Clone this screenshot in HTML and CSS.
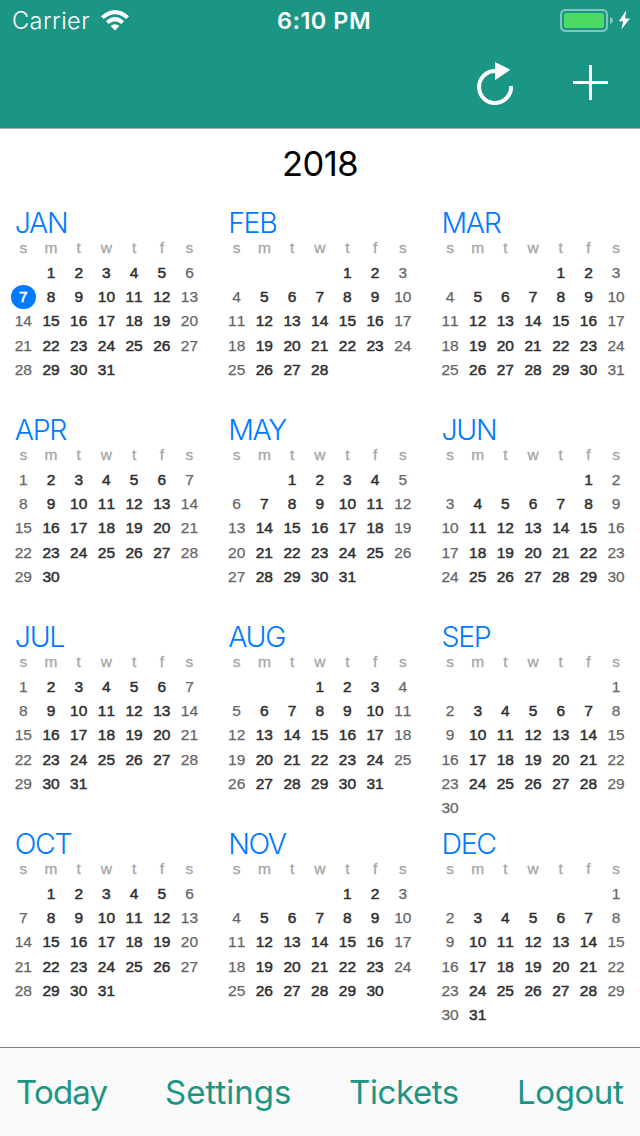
FILE: index.html
```html
<!DOCTYPE html>
<html lang="en">
<head>
<meta charset="utf-8">
<title>Calendar 2018</title>
<link rel="stylesheet" href="styles.css">
</head>
<body>
<header class="header">
  <div class="status">
    <div class="network"><span class="carrier">Carrier</span>
      <svg class="wifi" width="28" height="21" viewBox="0 0 28 21"><path d="M0 6.2Q14-6 28 6.2L25.2 9.1Q14-.7 2.8 9.1ZM4.9 11.2Q14 3 23.1 11.2L20.3 14Q14 8.5 7.7 14ZM9.6 16Q14 12.3 18.4 16L14 20.5Z" fill="#fff"/></svg>
    </div>
    <div class="clock">6:10 PM</div>
    <svg class="battery" width="72" height="24" viewBox="0 0 72 24"><rect x="1" y="1" width="46" height="21" rx="4.5" fill="none" stroke="#84c5bb" stroke-width="2"/><rect x="4" y="4" width="40" height="15" rx="2" fill="#4cd964"/><path d="M50 8Q53 9 53 11.5T50 15Z" fill="#84c5bb"/><path d="M66.3 1.2L58.8 12.2H63.2L61.3 20.5L70 9.5H65Z" fill="#fff"/></svg>
  </div>
  <div class="actions">
    <svg width="40" height="46" viewBox="0 0 40 46"><path d="M20 11A16 16 0 1 0 36 26" fill="none" stroke="#fff" stroke-width="4"/><path d="M20 2L35.3 9.7L20 20.2Z" fill="#fff"/></svg>
    <svg width="36" height="46" viewBox="0 0 36 46"><path d="M0 22.5H35M17.5 5V40" fill="none" stroke="#fff" stroke-width="3"/></svg>
  </div>
</header>
<main class="calendar">
  <h1 class="year">2018</h1>
  <div class="months" id="months"></div>
</main>
<nav class="toolbar"><span class="tool-today">Today</span><span class="tool-settings">Settings</span><span class="tool-tickets">Tickets</span><span class="tool-logout">Logout</span></nav>
<script src="calendar.js"></script>
</body>
</html>
```
FILE: styles.css
```css
* { box-sizing: border-box; }
body {
  margin: 0;
  width: 640px;
  height: 1136px;
  display: flex;
  flex-direction: column;
  overflow: hidden;
  background: #fff;
  font-family: Inter, "Liberation Sans", sans-serif;
}
.header { flex: none; height: 129px; background: #1b9584; border-bottom: 1px solid #a3a9a8; color: #fff; }
.status { display: grid; grid-template-columns: 1fr auto 1fr; height: 40px; padding: 1px 8px 0 12px; align-items: center; }
.network { display: flex; align-items: center; gap: 11px; font-size: 23.5px; }
.carrier { font-weight: 300; letter-spacing: .45px; }
.clock { font-size: 23.5px; font-weight: 600; letter-spacing: .5px; margin-left: 4px; }
.battery { justify-self: end; }
.actions { display: flex; justify-content: flex-end; gap: 58px; padding: 20px 31px 0 0; }
.calendar { flex: 1; }
.year { margin: 0; padding-top: 14px; height: 81px; line-height: 42px; text-align: center; font-size: 34.5px; font-weight: 400; letter-spacing: -.6px; }
.months { display: grid; grid-template-columns: repeat(3, 1fr); grid-auto-rows: 207px; }
.month { padding: 0 9.8px 0 9.5px; font-family: "Liberation Sans", Arial, sans-serif; }
.month-name { margin: 0; padding-left: 5.3px; height: 26.3px; font: 300 28.5px/26.3px Inter, sans-serif; letter-spacing: -1.3px; color: #007aff; }
.days { display: grid; grid-template-columns: repeat(7, 27.7px); grid-auto-rows: 24.35px; line-height: 24.35px; font-size: 15.5px; font-kerning: none; text-align: center; color: #303030; -webkit-text-stroke: .5px; }
.weekday { color: #a5a5a5; -webkit-text-stroke-width: .3px; }
.weekend { color: #666; -webkit-text-stroke-width: .25px; }
.today { justify-self: center; width: 24.4px; border-radius: 50%; background: #007aff; color: #fff; -webkit-text-stroke-width: .6px; }
.toolbar { flex: none; height: 89px; display: grid; grid-template-columns: 149px 184px 168px auto; padding-left: 16px; border-top: 1px solid #7f8080; background: #f9f9f9; color: #1b9584; font-size: 33px; line-height: 89px; }
.tool-today { letter-spacing: -.8px; }
.tool-settings { letter-spacing: 0; }
.tool-tickets { letter-spacing: -.4px; }
.tool-logout { letter-spacing: -.4px; }
```
FILE: calendar.js
```javascript
const year = 2018;
const names = ["JAN", "FEB", "MAR", "APR", "MAY", "JUN", "JUL", "AUG", "SEP", "OCT", "NOV", "DEC"];
const container = document.getElementById("months");

function cell(text, className) {
  const el = document.createElement("span");
  el.textContent = text;
  if (className) el.className = className;
  return el;
}

names.forEach((name, m) => {
  const month = document.createElement("section");
  month.className = "month";
  const title = document.createElement("h2");
  title.className = "month-name";
  title.textContent = name;
  const days = document.createElement("div");
  days.className = "days";
  for (const d of "smtwtfs") days.append(cell(d, "weekday"));
  const first = new Date(year, m, 1).getDay();
  const count = new Date(year, m + 1, 0).getDate();
  for (let i = 0; i < first; i++) days.append(cell(""));
  for (let d = 1; d <= count; d++) {
    const dow = (first + d - 1) % 7;
    days.append(cell(d, m === 0 && d === 7 ? "today" : dow === 0 || dow === 6 ? "weekend" : ""));
  }
  month.append(title, days);
  container.append(month);
});
```
